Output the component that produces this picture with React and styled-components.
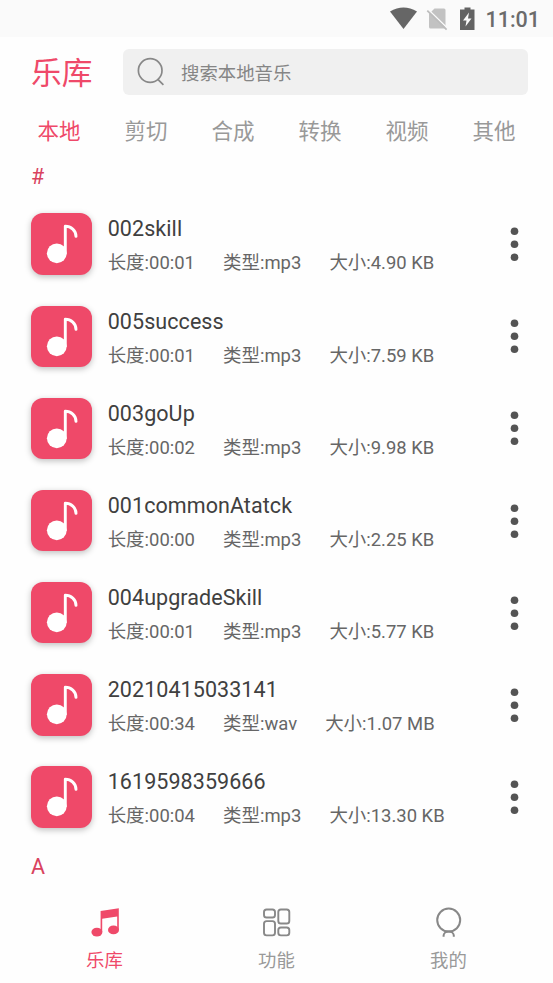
import React from 'react';
import styled, { createGlobalStyle } from 'styled-components';

const tabs = ['本地', '剪切', '合成', '转换', '视频', '其他'];

const songs = [
    { name: '002skill', length: '00:01', type: 'mp3', size: '4.90 KB' },
    { name: '005success', length: '00:01', type: 'mp3', size: '7.59 KB' },
    { name: '003goUp', length: '00:02', type: 'mp3', size: '9.98 KB' },
    { name: '001commonAtatck', length: '00:00', type: 'mp3', size: '2.25 KB' },
    { name: '004upgradeSkill', length: '00:01', type: 'mp3', size: '5.77 KB' },
    { name: '20210415033141', length: '00:34', type: 'wav', size: '1.07 MB' },
    { name: '1619598359666', length: '00:04', type: 'mp3', size: '13.30 KB' },
];

function StatusIcons() {
    return (
        <svg width="87" height="24" viewBox="0 0 87 24">
            <path d="M0 4.400Q13.500-3.400 27 4.400L13.500 22Z" fill="#666" />
            <path d="M44.500 1.500h9.500a1.500 1.500 0 0 1 1.500 1.500V20a1.500 1.500 0 0 1-1.500 1.500H40.500A1.500 1.500 0 0 1 39 20V7Z" fill="#c2c2c2" />
            <path d="M38.500 2.800 57.500 21.300" stroke="#fafafa" strokeWidth="1.500" />
            <path d="M37.300 3.700 56.600 22.700" stroke="#bcbcbc" strokeWidth="1.700" />
            <path d="M74.500 .5h6v2h4V23H70V2.500H74.500Z" fill="#636363" />
            <path d="m79 5.500-6 8h3.500l-1 6 6-8h-3.500Z" fill="#fafafa" />
        </svg>
    );
}

function SearchIcon() {
    return (
        <svg width="28" height="30" viewBox="0 0 28 30" fill="none" stroke="#888" strokeWidth="1.7">
            <circle cx="13.200" cy="13.500" r="11.800" />
            <path d="m20.600 22.100 5.800 5.800" />
        </svg>
    );
}

function NoteIcon() {
    return (
        <svg width="61" height="61" viewBox="0 0 61 61">
            <circle cx="25.800" cy="40.300" r="9.900" fill="#fff" />
            <path d="M34.300 40V13.300C40 13.300 45 17.500 45 23.400" fill="none" stroke="#fff" strokeWidth="2.900" strokeLinecap="round" strokeLinejoin="round" />
        </svg>
    );
}

function DotsIcon() {
    return (
        <svg width="10" height="36" viewBox="0 0 10 36" fill="#545454">
            <circle cx="5.500" cy="5.300" r="3.800" />
            <circle cx="5.500" cy="18.300" r="3.800" />
            <circle cx="5.500" cy="31.300" r="3.800" />
        </svg>
    );
}

function LibraryIcon() {
    return (
        <svg width="30" height="30" viewBox="0 0 30 30" fill="#ef4969">
            <path d="M10.600 3.900 28.800 1.300V23h-1.600V9.600L12.200 11.700V25h-1.600Z" />
            <ellipse cx="6.900" cy="25.100" rx="5.500" ry="4.400" />
            <ellipse cx="23.500" cy="22.900" rx="5.500" ry="4.400" />
        </svg>
    );
}

function GridIcon() {
    return (
        <svg width="30" height="30" viewBox="0 0 30 30" fill="none" stroke="#888" strokeWidth="1.900">
            <rect x="2" y="2.500" width="11" height="8" rx="2.600" />
            <rect x="2" y="14.100" width="11" height="14.300" rx="2.600" />
            <rect x="16.300" y="2.500" width="11" height="14" rx="2.600" />
            <rect x="16.300" y="20.500" width="11" height="7.900" rx="2.600" />
        </svg>
    );
}

function MineIcon() {
    return (
        <svg width="30" height="30" viewBox="0 0 30 30" fill="none" stroke="#888" strokeWidth="2">
            <circle cx="14.700" cy="13.100" r="11.500" />
            <path d="M9.600 29.800v-1.200a5.100 4 0 0 1 10.200 0v1.200" />
        </svg>
    );
}

function SongRow({ song }) {
    return (
        <Row>
            <Cover><NoteIcon /></Cover>
            <Info>
                <SongName>{song.name}</SongName>
                <Meta>
                    <span>长度:{song.length}</span>
                    <span>类型:{song.type}</span>
                    <span>大小:{song.size}</span>
                </Meta>
            </Info>
            <DotsIcon />
        </Row>
    );
}

function App() {
    return (
        <>
            <GlobalStyle />
            <Screen>
                <StatusBar>
                    <StatusIcons />
                    <Clock>11:01</Clock>
                </StatusBar>
                <Header>
                    <Title>乐库</Title>
                    <SearchBox>
                        <SearchIcon />
                        <Placeholder>搜索本地音乐</Placeholder>
                    </SearchBox>
                </Header>
                <Tabs>
                    {tabs.map((tab, i) => <Tab key={tab} $active={i === 0}>{tab}</Tab>)}
                </Tabs>
                <List>
                    <Section $height="44.5px" $lineHeight="46px">#</Section>
                    {songs.map((song) => <SongRow key={song.name} song={song} />)}
                    <Section $height="46px" $lineHeight="48px">A</Section>
                </List>
                <BottomNav>
                    <NavItem $active><LibraryIcon />乐库</NavItem>
                    <NavItem><GridIcon />功能</NavItem>
                    <NavItem><MineIcon />我的</NavItem>
                </BottomNav>
            </Screen>
        </>
    );
}

const GlobalStyle = createGlobalStyle`
    * {
        box-sizing: border-box;
    }
    body {
        margin: 0;
        background: #fefefe;
        font-family: Roboto, "Noto Sans CJK SC", sans-serif;
    }
    svg {
        display: block;
        flex: none;
    }
`;

const Screen = styled.div`
    width: 553px;
    height: 983px;
    display: flex;
    flex-direction: column;
    overflow: hidden;
`;

const StatusBar = styled.div`
    height: 37px;
    flex: none;
    display: flex;
    align-items: center;
    justify-content: flex-end;
    padding-right: 13px;
    background: #fafafa;
`;

const Clock = styled.span`
    margin-left: 8px;
    padding-top: 2px;
    color: #6b6b6b;
    font-size: 21.5px;
    font-weight: 500;
    line-height: 37px;
`;

const Header = styled.div`
    height: 70px;
    flex: none;
    display: flex;
    align-items: center;
    padding: 0 25px 0 31px;
`;

const Title = styled.h1`
    width: 92px;
    margin: 0;
    padding-top: 3px;
    color: #ef4969;
    font-size: 30.7px;
    font-weight: 400;
    line-height: 46px;
`;

const SearchBox = styled.div`
    flex: 1;
    height: 46px;
    display: flex;
    align-items: center;
    padding-left: 14px;
    border-radius: 6px;
    background: #f0f0f0;
`;

const Placeholder = styled.span`
    margin-left: 16px;
    color: #858585;
    font-size: 18.4px;
`;

const Tabs = styled.div`
    height: 46.5px;
    flex: none;
    display: flex;
    padding: 0 15.4px;
`;

const Tab = styled.div`
    flex: 1;
    text-align: center;
    color: ${({ $active }) => ($active ? '#ef4969' : '#999')};
    font-size: 21.5px;
    line-height: 49px;
`;

const List = styled.div`
    height: 736px;
    flex: none;
`;

const Section = styled.div`
    height: ${({ $height }) => $height};
    padding-left: 31px;
    color: #d9435f;
    font-size: 21.5px;
    line-height: ${({ $lineHeight }) => $lineHeight};
`;

const Row = styled.div`
    height: 92.16px;
    display: flex;
    align-items: center;
    padding: 0 34px 0 31px;
`;

const Cover = styled.div`
    width: 61px;
    height: 61.4px;
    flex: none;
    border-radius: 12px;
    background: #ef4969;
    box-shadow: 0 2px 6px rgba(0, 0, 0, 0.25);
`;

const Info = styled.div`
    flex: 1;
    padding: 5.8px 0 0 15.7px;
`;

const SongName = styled.div`
    color: #404040;
    font-size: 21.5px;
    letter-spacing: 0.07px;
    line-height: 34px;
`;

const Meta = styled.div`
    display: flex;
    gap: 28.1px;
    color: #666;
    font-size: 18.45px;
    line-height: 35px;
    white-space: nowrap;
`;

const BottomNav = styled.nav`
    flex: 1;
    display: flex;
    padding: 17px 18.5px 0;
`;

const NavItem = styled.div`
    flex: 1;
    display: flex;
    flex-direction: column;
    align-items: center;
    color: ${({ $active }) => ($active ? '#ef4969' : '#999')};
    font-size: 18.4px;
    line-height: 48px;
`;

export default App;
